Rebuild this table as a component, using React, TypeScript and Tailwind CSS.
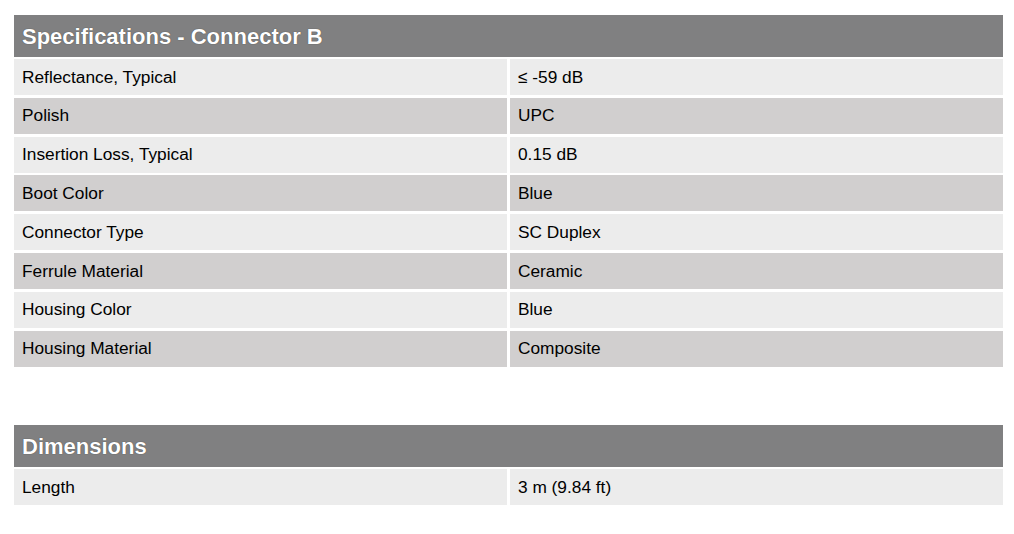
const connectorSpecs: [string, string][] = [
  ['Reflectance, Typical', '≤ -59 dB'],
  ['Polish', 'UPC'],
  ['Insertion Loss, Typical', '0.15 dB'],
  ['Boot Color', 'Blue'],
  ['Connector Type', 'SC Duplex'],
  ['Ferrule Material', 'Ceramic'],
  ['Housing Color', 'Blue'],
  ['Housing Material', 'Composite'],
];

const dimensions: [string, string][] = [['Length', '3 m (9.84 ft)']];

function SpecTable({ title, rows }: { title: string; rows: [string, string][] }) {
  return (
    <section className="flex flex-col gap-[2px]">
      <h2 className="h-[42px] flex items-center px-2 bg-[#808081] text-white font-bold text-[22px] [text-shadow:0_0_1px_rgba(0,0,0,0.6)]">
        {title}
      </h2>
      <div className="flex flex-col gap-[2.8px]">
        {rows.map(([label, value], i) => (
          <div key={label} className="grid grid-cols-2 gap-[3px] h-[36px] text-[17.3px] text-black">
            <div className={`flex items-center px-2 pt-[1px] ${i % 2 === 0 ? 'bg-[#ececec]' : 'bg-[#d1cfcf]'}`}>{label}</div>
            <div className={`flex items-center px-2 pt-[1px] ${i % 2 === 0 ? 'bg-[#ececec]' : 'bg-[#d1cfcf]'}`}>{value}</div>
          </div>
        ))}
      </div>
    </section>
  );
}

export default function App() {
  return (
    <div className="w-[1014px] h-[534px] bg-white pt-[15px] pl-[14px] pr-[11px] font-['Liberation_Sans',Arial,sans-serif]">
      <div className="flex flex-col gap-[58.5px]">
        <SpecTable title="Specifications - Connector B" rows={connectorSpecs} />
        <SpecTable title="Dimensions" rows={dimensions} />
      </div>
    </div>
  );
}
